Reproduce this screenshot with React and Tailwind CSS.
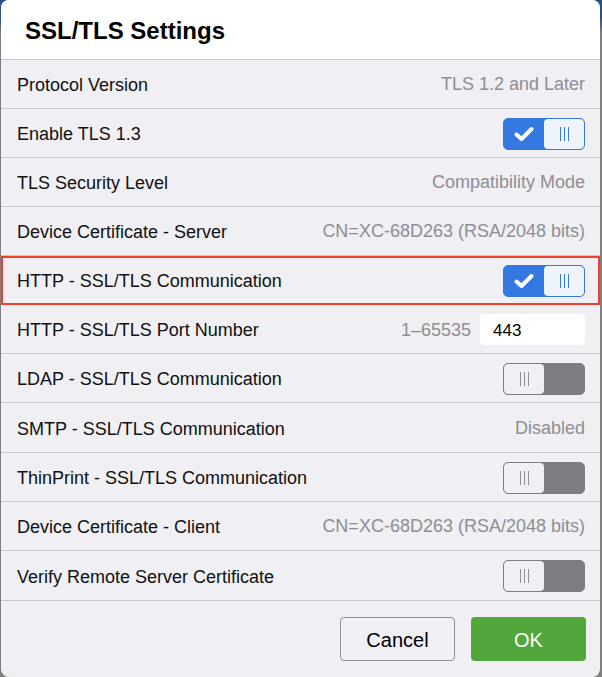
import React from "react";

const font = { fontFamily: '"Liberation Sans", Arial, sans-serif' };

function Bars({ color }) {
  return (
    <div className="flex gap-[3px]">
      <span className={`block w-px h-[14px] ${color}`} />
      <span className={`block w-px h-[14px] ${color}`} />
      <span className={`block w-px h-[14px] ${color}`} />
    </div>
  );
}

function Toggle({ on }) {
  if (on) {
    return (
      <div className="flex w-[82px] h-[32px] rounded-[5px] bg-[#3479e2] border border-[#3479e2] overflow-hidden">
        <div className="w-[40px] flex items-center justify-center">
          <svg width="20" height="16" viewBox="0 0 20 16">
            <polyline points="2.5,8.5 7.5,13 17.5,3" fill="none" stroke="#fff" strokeWidth="4" strokeLinecap="round" strokeLinejoin="round" />
          </svg>
        </div>
        <div className="flex-1 bg-[#eff3fa] rounded-[4px] flex items-center justify-center">
          <Bars color="bg-[#3479e2]" />
        </div>
      </div>
    );
  }
  return (
    <div className="flex w-[82px] h-[32px] rounded-[5px] bg-[#7e7e82] border border-[#7e7e82] overflow-hidden">
      <div className="w-[40px] bg-[#efeff4] rounded-[4px] flex items-center justify-center">
        <Bars color="bg-[#8e8e93]" />
      </div>
      <div className="flex-1" />
    </div>
  );
}

function Row({ label, children, highlight, tall }) {
  return (
    <div
      className={`${tall ? "h-[50px]" : "h-[49px]"} flex items-center justify-between pl-[16px] pr-[15px] border-b border-[#c8c7cc] ${
        highlight ? "outline-2 outline-[#f0402a] -outline-offset-2" : ""
      }`}
    >
      <span className="text-[18px] text-[#111] pt-[3px]">{label}</span>
      <div className="pt-px">{children}</div>
    </div>
  );
}

function Value({ children }) {
  return <span className="text-[18px] text-[#8e8e93] pt-[2px]">{children}</span>;
}

export default function App() {
  return (
    <div
      className="w-[602px] h-[677px] pl-px pr-[2px] bg-[linear-gradient(to_bottom,#2c4f88_0px,#2c4f88_18px,#7f7f82_34px)]"
      style={font}
    >
      <div className="h-full flex flex-col rounded-[8px] overflow-hidden bg-[#efeff4]">
        <div className="h-[60px] shrink-0 bg-white border-b border-[#c8c7cc] flex items-center pl-[24px] pt-[3px]">
          <h1 className="text-[24px] font-bold text-black">SSL/TLS Settings</h1>
        </div>
        <Row label="Protocol Version">
          <Value>TLS 1.2 and Later</Value>
        </Row>
        <Row label="Enable TLS 1.3">
          <Toggle on />
        </Row>
        <Row label="TLS Security Level">
          <Value>Compatibility Mode</Value>
        </Row>
        <Row label="Device Certificate - Server">
          <Value>CN=XC-68D263 (RSA/2048 bits)</Value>
        </Row>
        <Row label="HTTP - SSL/TLS Communication" highlight>
          <Toggle on />
        </Row>
        <Row label="HTTP - SSL/TLS Port Number">
          <div className="flex items-center gap-[9px]">
            <Value>1–65535</Value>
            <div className="w-[105px] h-[31px] bg-white rounded-[4px] flex items-center pl-[13px] pt-[2px] text-[17px] text-black">
              443
            </div>
          </div>
        </Row>
        <Row label="LDAP - SSL/TLS Communication">
          <Toggle />
        </Row>
        <Row label="SMTP - SSL/TLS Communication" tall>
          <Value>Disabled</Value>
        </Row>
        <Row label="ThinPrint - SSL/TLS Communication">
          <Toggle />
        </Row>
        <Row label="Device Certificate - Client">
          <Value>CN=XC-68D263 (RSA/2048 bits)</Value>
        </Row>
        <Row label="Verify Remote Server Certificate" tall>
          <Toggle />
        </Row>
        <div className="flex-1 flex items-center justify-end gap-[16px] pr-[14px] pb-[1px]">
          <button className="w-[115px] h-[44px] rounded-[4px] border border-[#8e8e93] bg-[#efeff4] text-[20px] text-black pt-[2px]">
            Cancel
          </button>
          <button className="w-[115px] h-[44px] rounded-[4px] bg-[#52a73c] text-[20px] text-white pt-[2px]">
            OK
          </button>
        </div>
      </div>
    </div>
  );
}
